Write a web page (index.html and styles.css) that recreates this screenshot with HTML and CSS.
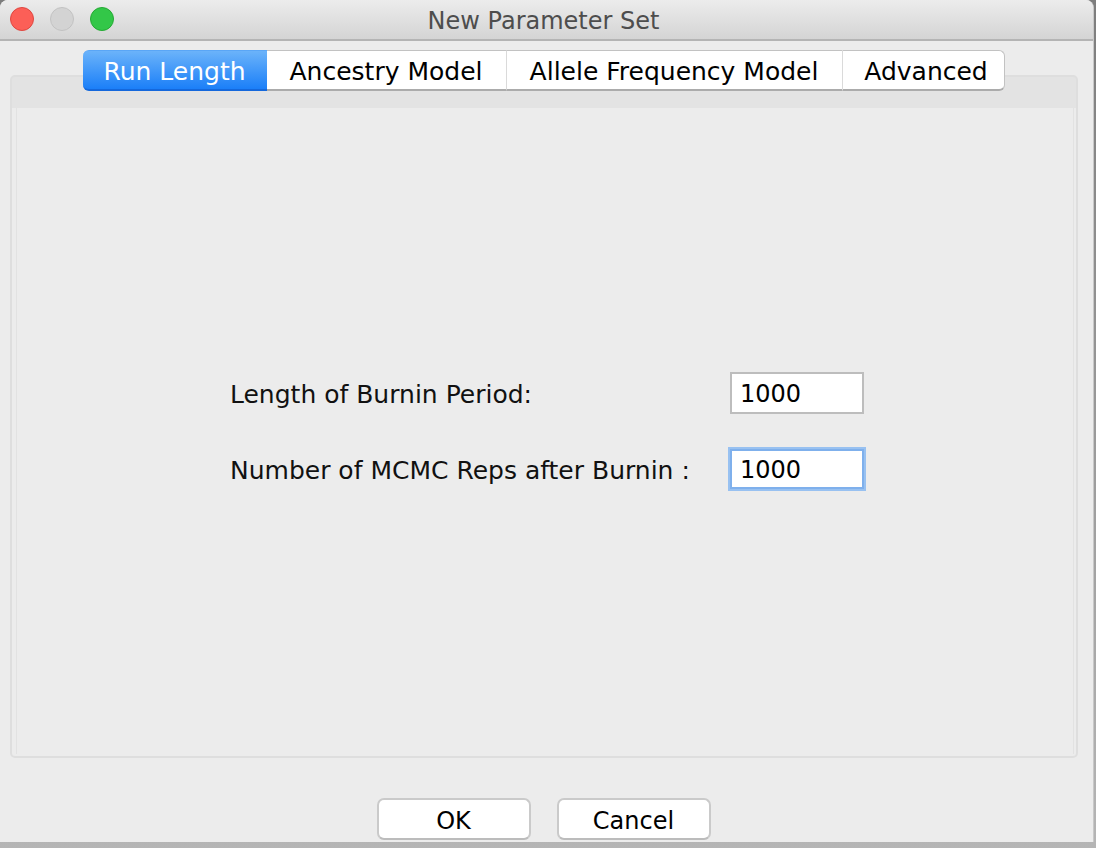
FILE: index.html
```html
<!DOCTYPE html>
<html>
<head>
<meta charset="utf-8">
<link rel="stylesheet" href="styles.css">
<title>New Parameter Set</title>
</head>
<body>
<div class="window">
  <div class="titlebar">
    <div class="lights">
      <span class="light red"></span>
      <span class="light gray"></span>
      <span class="light green"></span>
    </div>
    <div class="title">New Parameter Set</div>
  </div>
  <div class="content">
    <div class="tabs">
      <div class="tab active t1">Run Length</div>
      <div class="tab t2">Ancestry Model</div>
      <div class="tab t3">Allele Frequency Model</div>
      <div class="tab t4">Advanced</div>
    </div>
    <div class="panel">
      <div class="page">
        <div class="form">
          <div class="row">
            <label class="label">Length of Burnin Period:</label>
            <div class="field">1000</div>
          </div>
          <div class="row">
            <label class="label">Number of MCMC Reps after Burnin :</label>
            <div class="field focused">1000</div>
          </div>
        </div>
      </div>
    </div>
    <div class="footer">
      <button class="btn">OK</button>
      <button class="btn">Cancel</button>
    </div>
  </div>
</div>
</body>
</html>
```

FILE: styles.css
```css
html, body {
  margin: 0;
  padding: 0;
}
body {
  width: 1096px;
  height: 848px;
  overflow: hidden;
  background: linear-gradient(to bottom, #7d7d7d, #b5b5b5);
  font-family: "DejaVu Sans", "Liberation Sans", sans-serif;
  display: flex;
  align-items: flex-start;
}
.window {
  width: 1094px;
  height: 842px;
  background: #ececec;
  display: flex;
  flex-direction: column;
  border-radius: 8px 8px 0 0;
  overflow: hidden;
  border-right: 1px solid #c8c8c8;
  box-sizing: border-box;
}
.titlebar {
  height: 41px;
  box-sizing: border-box;
  border-bottom: 2px solid #b4b4b4;
  background: linear-gradient(to bottom, #ececec, #d4d4d4);
  display: flex;
  align-items: center;
}
.lights {
  display: flex;
  gap: 16px;
  padding-left: 10px;
  padding-bottom: 1px;
}
.light {
  width: 24px;
  height: 24px;
  border-radius: 50%;
  box-sizing: border-box;
}
.red { background: #fc5f57; border: 1px solid #de4740; }
.gray { background: #d3d3d3; border: 1px solid #c2c2c2; }
.green { background: #33c748; border: 1px solid #25a934; }
.title {
  flex: 1;
  text-align: center;
  font-size: 24px;
  color: #4d4d4d;
  margin-left: -120px;
  padding-top: 2px;
}
.content {
  flex: 1;
  display: flex;
  flex-direction: column;
  padding-top: 9px;
}
.tabs {
  display: flex;
  justify-content: center;
  height: 41px;
  position: relative;
  z-index: 1;
  margin-left: -6px;
}
.tab {
  box-sizing: border-box;
  height: 41px;
  background: #ffffff;
  border-top: 1px solid #c2c2c2;
  border-bottom: 2px solid #ababab;
  border-left: 1px solid #dadada;
  font-size: 25px;
  color: #000;
  display: flex;
  align-items: center;
  justify-content: center;
  padding-top: 2px;
}
.t1 { width: 184px; border-radius: 6px 0 0 6px; border-left: none; }
.t2 { width: 239px; border-left: none; }
.t3 { width: 336px; }
.t4 { width: 163px; border-right: 1px solid #c2c2c2; border-radius: 0 6px 6px 0; padding-left: 6px; }
.tab.active {
  background: linear-gradient(to bottom, #6bb3fa, #1b7ff8);
  color: #fff;
  border-top: 1px solid #5aa6f6;
  border-bottom: 2px solid #1468dc;
}
.panel {
  margin: -16px 15px 0 10px;
  height: 683px;
  box-sizing: border-box;
  border: 2px solid #dedede;
  border-radius: 5px;
  background: linear-gradient(to bottom, #e3e3e3 31px, #ececec 31px);
  padding: 31px 2px 2px 4px;
  display: flex;
}
.page {
  flex: 1;
  background: #ececec;
  border-left: 1px solid #e2e2e2;
  border-right: 1px solid #e2e2e2;
  display: flex;
  align-items: center;
  justify-content: center;
  padding-left: 4px;
}
.form {
  display: flex;
  flex-direction: column;
  gap: 34px;
  padding-bottom: 1px;
}
.row {
  display: flex;
  align-items: center;
  height: 42px;
}
.label {
  width: 500px;
  font-size: 25px;
  color: #111;
  padding-top: 3px;
}
.field {
  width: 134px;
  height: 42px;
  box-sizing: border-box;
  background: #fff;
  border: 2px solid #bdbdbd;
  font-size: 24px;
  color: #000;
  display: flex;
  align-items: center;
  padding-left: 8px;
  padding-top: 3px;
}
.field.focused {
  border: 2px solid #7fb0ec;
  box-shadow: 0 0 0 2px #98c1f1;
  height: 40px;
}
.footer {
  flex: 1;
  display: flex;
  justify-content: center;
  align-items: flex-end;
  gap: 26px;
  padding-bottom: 2px;
  padding-right: 6px;
}
.btn {
  width: 154px;
  height: 42px;
  background: #fff;
  border: 2px solid #cacaca;
  border-bottom-color: #bcbcbc;
  border-radius: 7px;
  font-family: "DejaVu Sans", "Liberation Sans", sans-serif;
  font-size: 24px;
  color: #000;
  padding: 3px 0 0 0;
}
```
